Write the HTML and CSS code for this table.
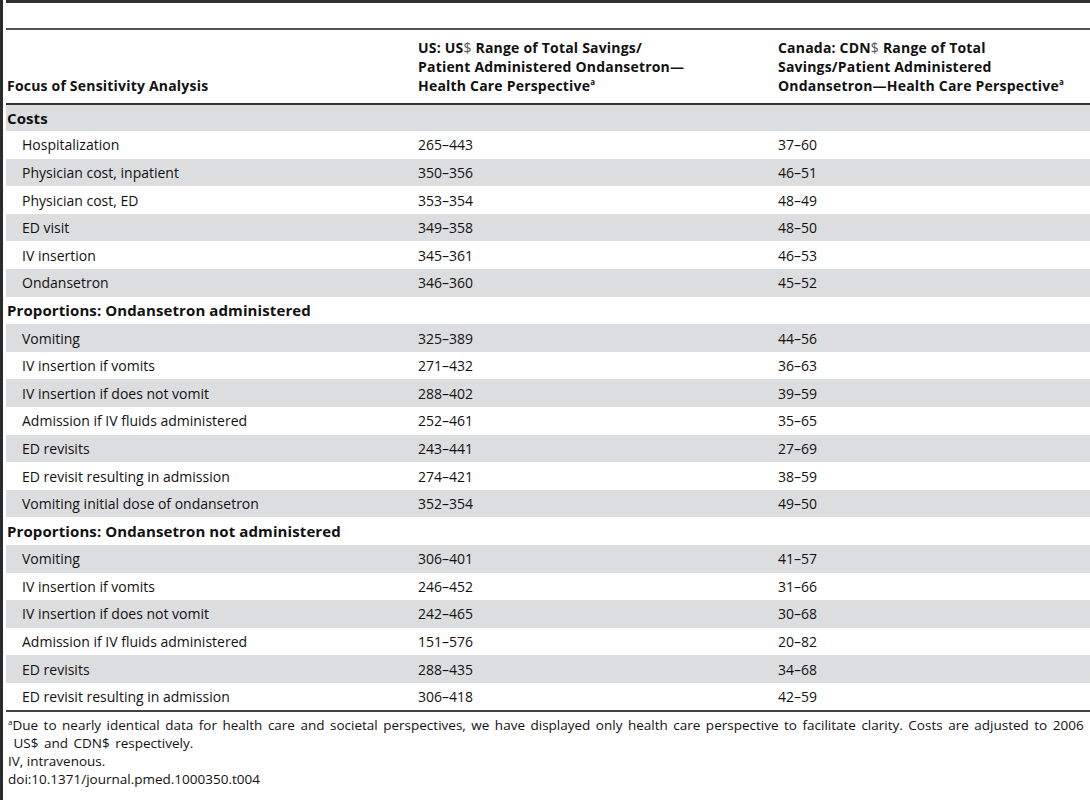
FILE: index.html
```html
<!DOCTYPE html>
<html lang="en">
<head>
    <meta charset="UTF-8">
    <meta name="viewport" content="width=device-width, initial-scale=1.0">
    <title>Table 4</title>
    <link rel="stylesheet" href="styles.css">
</head>
<body>
    <div class="table-wrap">
        <table class="data">
            <thead>
                <tr class="spacer"><th colspan="3"></th></tr>
                <tr class="heads">
                    <th class="c1">Focus of Sensitivity Analysis</th>
                    <th class="c2">US: US<span class="dollar">$</span> Range of Total Savings/<br>Patient Administered Ondansetron&#8212;<br>Health Care Perspective<sup>a</sup></th>
                    <th class="c3">Canada: CDN<span class="dollar">$</span> Range of Total<br>Savings/Patient Administered<br>Ondansetron&#8212;Health Care Perspective<sup>a</sup></th>
                </tr>
            </thead>
            <tbody>
                <tr class="group"><td colspan="3">Costs</td></tr>
                <tr><td class="item">Hospitalization</td><td>265&#8211;443</td><td>37&#8211;60</td></tr>
                <tr><td class="item">Physician cost, inpatient</td><td>350&#8211;356</td><td>46&#8211;51</td></tr>
                <tr><td class="item">Physician cost, ED</td><td>353&#8211;354</td><td>48&#8211;49</td></tr>
                <tr><td class="item">ED visit</td><td>349&#8211;358</td><td>48&#8211;50</td></tr>
                <tr><td class="item">IV insertion</td><td>345&#8211;361</td><td>46&#8211;53</td></tr>
                <tr><td class="item">Ondansetron</td><td>346&#8211;360</td><td>45&#8211;52</td></tr>
                <tr class="group"><td colspan="3">Proportions: Ondansetron administered</td></tr>
                <tr><td class="item">Vomiting</td><td>325&#8211;389</td><td>44&#8211;56</td></tr>
                <tr><td class="item">IV insertion if vomits</td><td>271&#8211;432</td><td>36&#8211;63</td></tr>
                <tr><td class="item">IV insertion if does not vomit</td><td>288&#8211;402</td><td>39&#8211;59</td></tr>
                <tr><td class="item">Admission if IV fluids administered</td><td>252&#8211;461</td><td>35&#8211;65</td></tr>
                <tr><td class="item">ED revisits</td><td>243&#8211;441</td><td>27&#8211;69</td></tr>
                <tr><td class="item">ED revisit resulting in admission</td><td>274&#8211;421</td><td>38&#8211;59</td></tr>
                <tr><td class="item">Vomiting initial dose of ondansetron</td><td>352&#8211;354</td><td>49&#8211;50</td></tr>
                <tr class="group"><td colspan="3">Proportions: Ondansetron not administered</td></tr>
                <tr><td class="item">Vomiting</td><td>306&#8211;401</td><td>41&#8211;57</td></tr>
                <tr><td class="item">IV insertion if vomits</td><td>246&#8211;452</td><td>31&#8211;66</td></tr>
                <tr><td class="item">IV insertion if does not vomit</td><td>242&#8211;465</td><td>30&#8211;68</td></tr>
                <tr><td class="item">Admission if IV fluids administered</td><td>151&#8211;576</td><td>20&#8211;82</td></tr>
                <tr><td class="item">ED revisits</td><td>288&#8211;435</td><td>34&#8211;68</td></tr>
                <tr><td class="item">ED revisit resulting in admission</td><td>306&#8211;418</td><td>42&#8211;59</td></tr>
            </tbody>
        </table>
        <div class="notes">
            <p class="first"><sup>a</sup>Due to nearly identical data for health care and societal perspectives, we have displayed only health care perspective to facilitate clarity. Costs are adjusted to 2006<br>&nbsp;US$ and CDN$ respectively.</p>
            <p>IV, intravenous.</p>
            <p>doi:10.1371/journal.pmed.1000350.t004</p>
        </div>
    </div>
</body>
</html>
```

FILE: styles.css
```css
* { box-sizing: border-box; margin: 0; padding: 0; }
body { font-family: "Open Sans", "Liberation Sans", sans-serif; color: #111; background: #fff; }
.table-wrap { border-left: 3px solid #2b2b2b; padding-left: 3px; min-height: 800px; }
.data { width: 100%; border-collapse: collapse; font-size: 14px; border-top: 3px solid #333; border-bottom: 2px solid #444; }
.data th { font-weight: 700; text-align: left; vertical-align: bottom; letter-spacing: 0.2px; }
.spacer th { height: 27px; border-bottom: 2px solid #555; }
.heads th { height: 75px; padding: 0 0 8px 0; line-height: 19px; border-bottom: 2px solid #333; }
.heads .c1 { width: 404px; padding-left: 1px; }
.heads .c2 { width: 360px; padding-left: 8px; }
.heads .c3 { padding-left: 8px; }
.dollar { font-weight: 400; color: #555; }
.data sup { font-size: 8px; vertical-align: 6px; line-height: 0; }
.data td { height: 27.6px; padding: 0 0 0 8px; vertical-align: middle; }
.data tbody tr:nth-child(odd) { background: #dcdddf; }
.data .group td { font-weight: 700; font-size: 15px; letter-spacing: 0.1px; padding-left: 1px; }
.data td.item { padding-left: 16px; }
.notes { font-size: 13.5px; line-height: 18px; padding: 4px 0 0 2px; }
.notes .first { word-spacing: 2px; white-space: nowrap; }
.notes sup { font-size: 8px; vertical-align: 5px; line-height: 0; }
```
